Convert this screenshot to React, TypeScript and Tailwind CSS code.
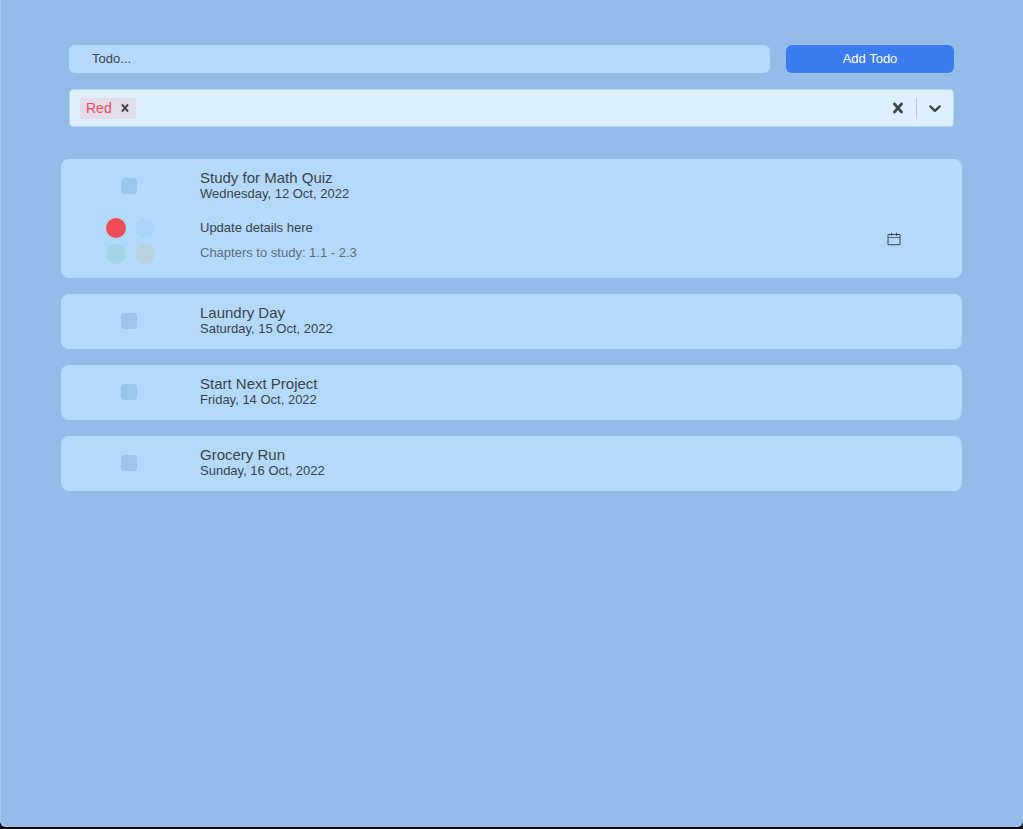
import { useState } from "react";

type Todo = { id: string; title: string; date: string; details?: string };

const TODOS: Todo[] = [
  { id: "math", title: "Study for Math Quiz", date: "Wednesday, 12 Oct, 2022", details: "Chapters to study: 1.1 - 2.3" },
  { id: "laundry", title: "Laundry Day", date: "Saturday, 15 Oct, 2022" },
  { id: "project", title: "Start Next Project", date: "Friday, 14 Oct, 2022" },
  { id: "grocery", title: "Grocery Run", date: "Sunday, 16 Oct, 2022" },
];

const COLORS = [
  { name: "Red", className: "bg-[#f04c59]" },
  { name: "Blue", className: "bg-[#a9d6f8]" },
  { name: "Green", className: "bg-[#a1d5e8]" },
  { name: "Yellow", className: "bg-[#b9d2e0]" },
];

function Cross({ className }: { className: string }) {
  return (
    <svg viewBox="0 0 20 20" className={className} fill="currentColor" stroke="currentColor" strokeWidth="0.6" aria-hidden="true">
      <path d="M14.348 14.849c-0.469 0.469-1.229 0.469-1.697 0l-2.651-3.030-2.651 3.029c-0.469 0.469-1.229 0.469-1.697 0-0.469-0.469-0.469-1.229 0-1.697l2.758-3.15-2.759-3.152c-0.469-0.469-0.469-1.228 0-1.697s1.228-0.469 1.697 0l2.652 3.031 2.651-3.031c0.469-0.469 1.228-0.469 1.697 0s0.469 1.229 0 1.697l-2.758 3.152 2.758 3.15c0.469 0.469 0.469 1.229 0 1.698z" />
    </svg>
  );
}

function Chevron() {
  return (
    <svg viewBox="0 0 20 20" className="size-5" fill="currentColor" aria-hidden="true">
      <path d="M4.516 7.548c0.436-0.446 1.043-0.481 1.576 0l3.908 3.747 3.908-3.747c0.533-0.481 1.141-0.446 1.574 0 0.436 0.445 0.408 1.197 0 1.615-0.406 0.418-4.695 4.502-4.695 4.502-0.217 0.223-0.502 0.335-0.787 0.335s-0.57-0.112-0.789-0.335c0 0-4.287-4.084-4.695-4.502s-0.436-1.17 0-1.615z" />
    </svg>
  );
}

function Calendar() {
  return (
    <svg viewBox="0 0 14 14" className="size-3.5" fill="none" stroke="currentColor" aria-hidden="true">
      <path d="M1 2.5h12v10.2H1zM4.5 0.8v3M9.5 0.8v3" />
      <path d="M1 5.5h12" strokeOpacity="0.75" />
    </svg>
  );
}

function ColorFilter() {
  const [selected, setSelected] = useState(["Red"]);
  return (
    <div className="flex h-[38px] items-center rounded border border-[#b3dafc] bg-[#def0fd]">
      <div className="flex flex-1 items-center px-2.5">
        {selected.map((name) => (
          <span key={name} className="flex h-[21px] items-center rounded-xs bg-[#e2dceb]">
            <span className="pb-px pl-1.5 text-sm leading-5 text-[#f04c59]">{name}</span>
            <button
              type="button"
              aria-label={`Remove ${name}`}
              className="px-1 pl-1.5"
              onClick={() => setSelected(selected.filter((n) => n !== name))}
            >
              <Cross className="size-3.5" />
            </button>
          </span>
        ))}
        <input aria-label="Filter colors" className="min-w-0 flex-1 bg-transparent px-1 text-sm outline-none" />
      </div>
      <button type="button" aria-label="Clear colors" className="px-2" onClick={() => setSelected([])}>
        <Cross className="size-5" />
      </button>
      <span className="h-[21px] w-px bg-[#c4c8cc]" />
      <button type="button" aria-label="Open color list" className="px-2">
        <Chevron />
      </button>
    </div>
  );
}

function TodoCard({ todo }: { todo: Todo }) {
  return (
    <li className="rounded-lg bg-[#b3dafc] pt-[11px] pb-3">
      <div className="flex items-center">
        <div className="flex w-[136px] justify-center">
          <input
            id={todo.id}
            type="checkbox"
            className="size-4 appearance-none rounded bg-[#9cc5e9] checked:bg-[#3b7bf0]"
          />
        </div>
        <label htmlFor={todo.id} className="flex-1 pl-[3px]">
          <span className="block text-[15px] leading-4">{todo.title}</span>
          <span className="block text-[13px] leading-4">{todo.date}</span>
        </label>
      </div>
      {todo.details && (
        <div className="flex items-start pt-4 pb-0.5">
          <div role="radiogroup" aria-label="Color" className="flex w-[139px] justify-center">
            <div className="grid grid-cols-2 gap-x-[9px] gap-y-1.5">
              {COLORS.map((color) => (
                <input
                  key={color.name}
                  type="radio"
                  name={`${todo.id}-color`}
                  aria-label={color.name}
                  defaultChecked={color.name === "Red"}
                  className={`size-5 appearance-none rounded-full ${color.className}`}
                />
              ))}
            </div>
          </div>
          <div className="flex flex-1 flex-col gap-1">
            <label htmlFor={`${todo.id}-details`} className="text-[13px] leading-5">
              Update details here
            </label>
            <input
              id={`${todo.id}-details`}
              placeholder={todo.details}
              className="h-5 w-full bg-transparent text-[13px] outline-none placeholder:text-[#616d7b]"
            />
          </div>
          <div className="flex h-[42px] w-[136px] items-center justify-center">
            <button type="button" aria-label="Pick a date">
              <Calendar />
            </button>
          </div>
        </div>
      )}
    </li>
  );
}

export default function App() {
  return (
    <div className="flex min-h-screen flex-col bg-[#08080c] pb-0.5 font-['Liberation_Sans',Arial,sans-serif] text-[#3d4349]">
      <main className="flex-1 rounded-b-md border-b border-l border-[#a5c9ee] bg-[#93bce8] pt-[45px] pr-[61px] pb-10 pl-[60px]">
        <form className="flex flex-col gap-4 px-2" onSubmit={(e) => e.preventDefault()}>
          <div className="flex gap-4">
            <input
              aria-label="Todo"
              placeholder="Todo..."
              className="h-7 min-w-0 flex-1 rounded-md bg-[#b3dafc] px-[23px] pb-0.5 text-[13px] outline-none placeholder:text-[#3d4349]"
            />
            <button type="submit" className="h-7 w-[168px] rounded-md bg-[#3b7bf0] text-[13px] text-white">
              Add Todo
            </button>
          </div>
          <ColorFilter />
        </form>
        <ul className="mt-8 flex flex-col gap-4">
          {TODOS.map((todo) => (
            <TodoCard key={todo.id} todo={todo} />
          ))}
        </ul>
      </main>
    </div>
  );
}
